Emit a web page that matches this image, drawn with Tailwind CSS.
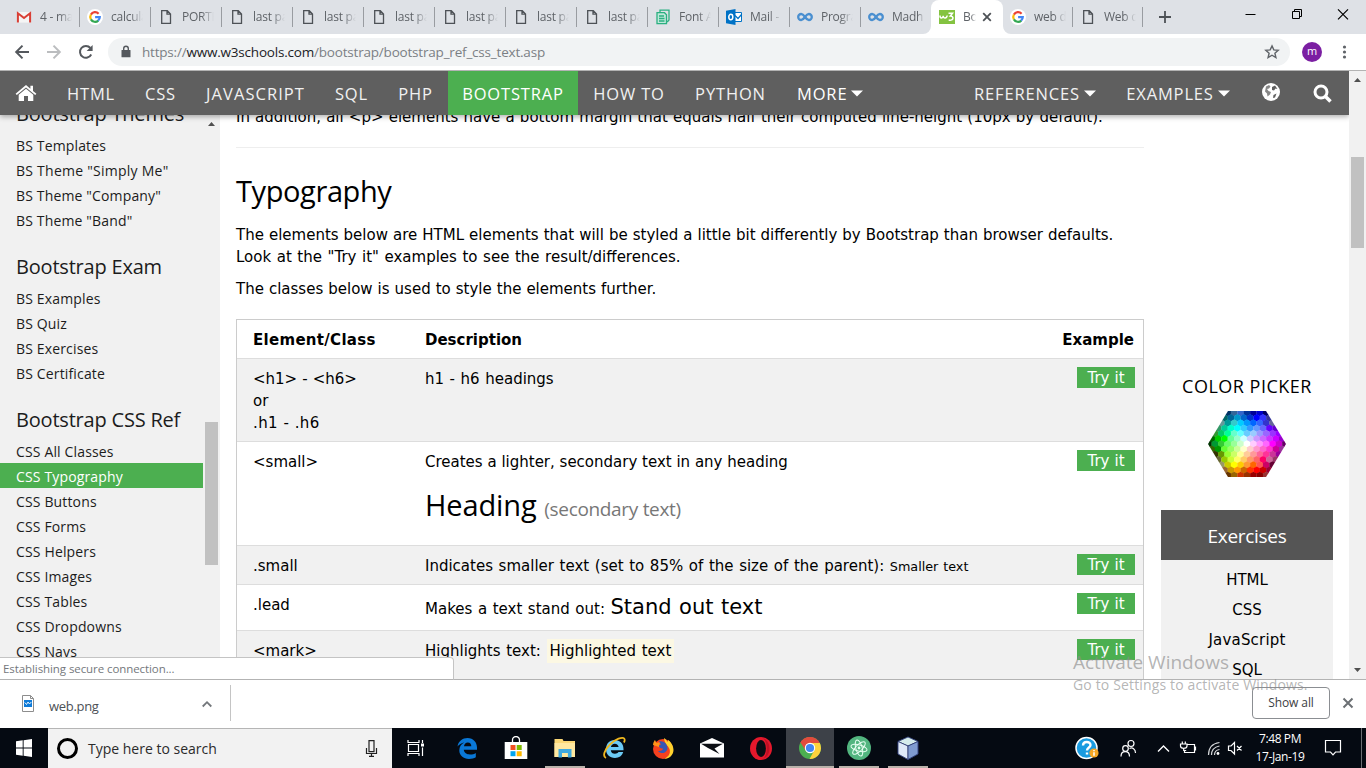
<!DOCTYPE html>
<html lang="en">
<head>
<meta charset="utf-8">
<title>Bootstrap CSS Typography Reference</title>
<script src="https://cdn.jsdelivr.net/npm/@tailwindcss/browser@4"></script>
</head>
<body class="overflow-hidden bg-white font-['Open_Sans','Noto_Sans',sans-serif] text-black">
<svg class="hidden">
  <symbol id="doc" viewBox="0 0 16 16"><path d="M3.7 1.7h5.6l3.2 3.2v9.4H3.7zM9 1.7v3.5h3.5" fill="none" stroke="#4d5156" stroke-width="1.3"/></symbol>
  <symbol id="goog" viewBox="0 0 16 16"><circle cx="8" cy="8" r="8" fill="#fff"/><g fill="none" stroke-width="2.2"><path d="M3.9 5.6A4.8 4.8 0 0 1 11.6 4.7" stroke="#ea4335"/><path d="M3.9 10.4a4.8 4.8 0 0 1 0-4.8" stroke="#fbbc05"/><path d="M11.3 11.6a4.8 4.8 0 0 1-7.4-1.2" stroke="#34a853"/><path d="M8.1 8.1h4.7a4.8 4.8 0 0 1-1.7 3.6" stroke="#4285f4"/></g></symbol>
  <symbol id="loop" viewBox="0 0 16 16"><path d="M8 8C6.500 5.800 5.600 5 4.200 5a3 3 0 0 0 0 6C5.600 11 6.500 10.200 8 8s2.400-3 3.800-3a3 3 0 0 1 0 6C10.400 11 9.500 10.200 8 8z" fill="none" stroke="#4a8fd0" stroke-width="2.300"/></symbol>
</svg>
<div class="relative flex h-[768px] w-[1366px] flex-col overflow-hidden">

  <!-- Tab strip -->
  <header class="flex h-[34px] shrink-0 bg-[#dee1e6] pl-[9px] text-[12px] tracking-[-0.250px] text-[#5f6368]">
    <div class="flex h-[34px] w-[71px] shrink-0 items-center pl-[7px]"><svg class="size-4 shrink-0" viewBox="0 0 16 16"><path d="M1 3h14v10.600H1z" fill="#f5f5f5"/><path d="M1.900 13.600V4.200L8 9l6.100-4.800v9.400" fill="none" stroke="#d93f35" stroke-width="2"/></svg><span class="ml-2 w-8 overflow-hidden whitespace-nowrap mask-r-from-60%">4 - mad</span><i class="ml-auto h-5 w-px bg-[#999ca1]"></i></div>
    <div class="flex h-[34px] w-[71px] shrink-0 items-center pl-[7px]"><svg class="size-4 shrink-0"><use href="#goog"/></svg><span class="ml-2 w-8 overflow-hidden whitespace-nowrap mask-r-from-60%">calcula</span><i class="ml-auto h-5 w-px bg-[#999ca1]"></i></div>
    <div class="flex h-[34px] w-[71px] shrink-0 items-center pl-[7px]"><svg class="size-4 shrink-0"><use href="#doc"/></svg><span class="ml-2 w-8 overflow-hidden whitespace-nowrap mask-r-from-60%">PORTF</span><i class="ml-auto h-5 w-px bg-[#999ca1]"></i></div>
    <div class="flex h-[34px] w-[71px] shrink-0 items-center pl-[7px]"><svg class="size-4 shrink-0"><use href="#doc"/></svg><span class="ml-2 w-8 overflow-hidden whitespace-nowrap mask-r-from-60%">last pa</span><i class="ml-auto h-5 w-px bg-[#999ca1]"></i></div>
    <div class="flex h-[34px] w-[71px] shrink-0 items-center pl-[7px]"><svg class="size-4 shrink-0"><use href="#doc"/></svg><span class="ml-2 w-8 overflow-hidden whitespace-nowrap mask-r-from-60%">last pa</span><i class="ml-auto h-5 w-px bg-[#999ca1]"></i></div>
    <div class="flex h-[34px] w-[71px] shrink-0 items-center pl-[7px]"><svg class="size-4 shrink-0"><use href="#doc"/></svg><span class="ml-2 w-8 overflow-hidden whitespace-nowrap mask-r-from-60%">last pa</span><i class="ml-auto h-5 w-px bg-[#999ca1]"></i></div>
    <div class="flex h-[34px] w-[71px] shrink-0 items-center pl-[7px]"><svg class="size-4 shrink-0"><use href="#doc"/></svg><span class="ml-2 w-8 overflow-hidden whitespace-nowrap mask-r-from-60%">last pa</span><i class="ml-auto h-5 w-px bg-[#999ca1]"></i></div>
    <div class="flex h-[34px] w-[71px] shrink-0 items-center pl-[7px]"><svg class="size-4 shrink-0"><use href="#doc"/></svg><span class="ml-2 w-8 overflow-hidden whitespace-nowrap mask-r-from-60%">last pa</span><i class="ml-auto h-5 w-px bg-[#999ca1]"></i></div>
    <div class="flex h-[34px] w-[71px] shrink-0 items-center pl-[7px]"><svg class="size-4 shrink-0"><use href="#doc"/></svg><span class="ml-2 w-8 overflow-hidden whitespace-nowrap mask-r-from-60%">last pa</span><i class="ml-auto h-5 w-px bg-[#999ca1]"></i></div>
    <div class="flex h-[34px] w-[71px] shrink-0 items-center pl-[7px]"><svg class="size-4 shrink-0" viewBox="0 0 16 16" fill="none" stroke="#2bb081" stroke-width="1.300"><path d="M5 3V1.200h9V11l-1.800 2"/><path d="M2 3.700h7.500l2 2V14.700H2z" fill="#bfe8da"/><path d="M4 7h5M4 9.500h5.500M4 12h5.500"/></svg><span class="ml-2 w-8 overflow-hidden whitespace-nowrap mask-r-from-60%">Font A</span><i class="ml-auto h-5 w-px bg-[#999ca1]"></i></div>
    <div class="flex h-[34px] w-[71px] shrink-0 items-center pl-[7px]"><svg class="size-4 shrink-0" viewBox="0 0 16 16"><path d="M8 3.500h7.500v9H8z" fill="#fff" stroke="#0072c6"/><path d="M9 6.500l3 3 3.500-4" fill="none" stroke="#0072c6" stroke-width="1.200"/><path d="M0 1.800 9.500 0v16L0 14.200z" fill="#0072c6"/><ellipse cx="4.800" cy="8" rx="2" ry="2.700" fill="none" stroke="#fff" stroke-width="1.500"/></svg><span class="ml-2 w-8 overflow-hidden whitespace-nowrap mask-r-from-60%">Mail -</span><i class="ml-auto h-5 w-px bg-[#999ca1]"></i></div>
    <div class="flex h-[34px] w-[71px] shrink-0 items-center pl-[7px]"><svg class="size-4 shrink-0"><use href="#loop"/></svg><span class="ml-2 w-8 overflow-hidden whitespace-nowrap mask-r-from-60%">Progra</span><i class="ml-auto h-5 w-px bg-[#999ca1]"></i></div>
    <div class="flex h-[34px] w-[70px] shrink-0 items-center pl-[7px]"><svg class="size-4 shrink-0"><use href="#loop"/></svg><span class="ml-2 w-8 overflow-hidden whitespace-nowrap mask-r-from-80%">Madhu</span></div>
    <div class="relative flex h-[34px] w-[72px] shrink-0 items-center rounded-t-lg bg-white pl-2">
      <svg class="absolute bottom-0 -left-2 size-2" viewBox="0 0 8 8"><path d="M8 0v8H0a8 8 0 0 0 8-8z" fill="#fff"/></svg>
      <svg class="absolute -right-2 bottom-0 size-2" viewBox="0 0 8 8"><path d="M0 0v8h8a8 8 0 0 1-8-8z" fill="#fff"/></svg>
      <svg class="size-4 shrink-0" viewBox="0 0 16 16"><path d="M0 1h16v14H0z" fill="#84c341"/><path d="M1 6.500c0 3.300 2.800 3.300 3.200.3 0 3 3.600 3 4-.3M9.500 4.200h4L11.300 7c4 0 3.400 5.300-1.600 4" fill="none" stroke="#fff" stroke-width="1.500"/></svg>
      <span class="ml-2 w-[13px] overflow-hidden whitespace-nowrap mask-r-from-60%">Bo</span>
      <svg class="ml-[5px] size-3" viewBox="0 0 12 12"><path d="M2.200 2.200l7.600 7.600M9.800 2.200 2.200 9.800" stroke="#4d5156" stroke-width="1.800"/></svg>
    </div>
    <div class="flex h-[34px] w-[70px] shrink-0 items-center pl-[7px]"><svg class="size-4 shrink-0"><use href="#goog"/></svg><span class="ml-2 w-8 overflow-hidden whitespace-nowrap mask-r-from-60%">web d</span><i class="ml-auto h-5 w-px bg-[#999ca1]"></i></div>
    <div class="flex h-[34px] w-[70px] shrink-0 items-center pl-[7px]"><svg class="size-4 shrink-0"><use href="#doc"/></svg><span class="ml-2 w-8 overflow-hidden whitespace-nowrap mask-r-from-60%">Web d</span><i class="ml-auto h-5 w-px bg-[#999ca1]"></i></div>
    <svg class="mt-[11px] ml-4 size-3" viewBox="0 0 12 12"><path d="M6 0v12M0 6h12" stroke="#4d5156" stroke-width="1.800"/></svg>
    <svg class="ml-auto h-[34px] w-[130px]" viewBox="0 0 130 34" fill="none" stroke="#000"><path d="M9.500 14.500h10"/><path d="M56.500 11.500h7v7h-7zM58.500 11.500v-2h7v7h-2"/><path d="M102 9.300l10 10M112 9.300l-10 10" stroke-width="1.200"/></svg>
  </header>

  <!-- Toolbar -->
  <div class="flex h-[37px] shrink-0 items-center border-b border-[#b3b3b3] bg-white">
    <svg class="h-9 w-[108px] shrink-0" viewBox="0 0 108 36" fill="none" stroke-width="2"><path d="M29 18H16.500M22.500 11.600 16.200 18l6.300 6.400" stroke="#54585d"/><path d="M47 18h12.500M53.500 11.600 59.800 18l-6.300 6.400" stroke="#bbbdbf"/><path d="M91.200 20.500a5.900 5.900 0 1 1-.8-6.500" stroke="#54585d"/><path d="M92.600 11v6h-6z" fill="#54585d"/></svg>
    <div class="flex h-7 w-[1182px] items-center rounded-full bg-[#f1f3f4]">
      <svg class="ml-3 h-[14px] w-3" viewBox="0 0 12 14"><path d="M2 5h8a.5.5 0 0 1 .5.500v6.200a.5.500 0 0 1-.5.500H2a.5.500 0 0 1-.5-.5V5.500A.5.500 0 0 1 2 5z" fill="#54585d"/><path d="M3.700 6V3.600a2.300 2.300 0 0 1 4.600 0V6" fill="none" stroke="#54585d" stroke-width="1.400"/></svg>
      <span class="ml-[10px] text-[13.500px] tracking-[-0.200px] text-[#7b7f84]">https://<span class="text-[#202124]">www.w3schools.com</span>/bootstrap/bootstrap_ref_css_text.asp</span>
      <svg class="mr-[10px] ml-auto size-4" viewBox="0 0 16 16"><path d="M8 1.900l1.800 4 4.400.4-3.300 2.900 1 4.300L8 11.200l-3.900 2.300 1-4.300-3.300-2.900 4.400-.4z" fill="none" stroke="#5f6368" stroke-width="1.400"/></svg>
    </div>
    <div class="ml-3 flex size-5 items-center justify-center rounded-full bg-[#7b1fa2] pb-px text-[11px] text-white">m</div>
    <svg class="ml-[18px] h-4 w-1 overflow-visible" viewBox="0 0 4 16" fill="#5f6368"><circle cx="4.500" cy="3" r="1.600"/><circle cx="4.500" cy="8" r="1.600"/><circle cx="4.500" cy="13" r="1.600"/></svg>
  </div>

  <!-- Web page -->
  <div class="flex h-[608px] shrink-0">
    <div class="flex w-[1349px] flex-col overflow-hidden">
      <nav class="z-10 flex h-11 shrink-0 bg-[#5f5f5f] pt-px text-[16.500px] leading-[44px] tracking-[0.850px] text-[#f1f1f1] shadow-[0_2px_5px_rgba(0,0,0,0.3)]">
        <a class="flex w-[52px] items-center justify-center"><svg class="mt-[-2px] h-[18px] w-[22px]" viewBox="0 0 22 18" fill="#fff"><path d="M11 1 .6 9.800l1.200 1.300L11 3.500l9.200 7.600 1.200-1.300L18 6.900V1.700h-2.600v3z"/><path d="M11 4.800 3.700 10.800V17H9v-5h4v5h5.300v-6.200z"/></svg></a>
        <a class="w-[78px] text-center">HTML</a>
        <a class="w-[61px] text-center">CSS</a>
        <a class="w-[129px] text-center tracking-[1.050px]">JAVASCRIPT</a>
        <a class="w-[63px] text-center">SQL</a>
        <a class="w-[65px] text-center">PHP</a>
        <a class="-mt-px w-[130px] bg-[#4caf50] pt-px text-center text-white">BOOTSTRAP</a>
        <a class="w-[102px] text-center">HOW TO</a>
        <a class="w-[101px] text-center">PYTHON</a>
        <a class="flex items-center gap-1 pl-4 text-white">MORE<svg class="h-[7px] w-3" viewBox="0 0 12 7"><path d="M0 .5h12L6 6.500z" fill="#fff"/></svg></a>
        <a class="ml-auto flex w-[152px] items-center justify-center gap-1">REFERENCES<svg class="h-[7px] w-3" viewBox="0 0 12 7"><path d="M0 .5h12L6 6.500z" fill="#fff"/></svg></a>
        <a class="flex w-[134px] items-center justify-center gap-1">EXAMPLES<svg class="h-[7px] w-3" viewBox="0 0 12 7"><path d="M0 .5h12L6 6.500z" fill="#fff"/></svg></a>
        <a class="flex w-[51px] items-center justify-center"><svg class="-mt-1 size-[18px]" viewBox="0 0 18 18"><circle cx="9" cy="9" r="9" fill="#fff"/><path d="M4 3.500 7 2l1.500 1.500L7 5.500 5 6l1.500 2 2.500 1-1 2.500-2.500 2L5 10.500 3 8.500z" fill="#5f5f5f" opacity=".75"/><path d="M10 4l3-1.500L15.500 6l-2-.5-1.500 2L10 7z" fill="#5f5f5f"/><path d="M11.500 12l3-1.500-1.500 4-2 .5z" fill="#5f5f5f"/></svg></a>
        <a class="flex w-[53px] items-center justify-center"><svg class="-mt-px size-[19px]" viewBox="0 0 19 19" fill="none" stroke="#fff"><circle cx="8" cy="8" r="6" stroke-width="3"/><path d="M12.500 12.500l5 5" stroke-width="3.600"/></svg></a>
      </nav>

      <div class="flex h-[564px]">
        <aside class="flex w-[220px] shrink-0 overflow-hidden bg-[#f1f1f1]">
          <div class="-mt-[36px] w-[203px] shrink-0 whitespace-nowrap text-[14px] tracking-[0.150px] text-[#1c1c1c] [&>a]:block [&>a]:h-[25px] [&>a]:pl-4 [&>a]:leading-[27px] [&>h2]:h-[53px] [&>h2]:pt-[15px] [&>h2]:pl-4 [&>h2]:text-[20px] [&>h2]:leading-[39px] [&>h2]:tracking-[-0.200px]">
            <h2>Bootstrap Themes</h2>
            <a>BS Templates</a><a class="tracking-[0.250px]">BS Theme "Simply Me"</a><a>BS Theme "Company"</a><a>BS Theme "Band"</a>
            <h2>Bootstrap Exam</h2>
            <a>BS Examples</a><a>BS Quiz</a><a>BS Exercises</a><a>BS Certificate</a>
            <h2>Bootstrap CSS Ref</h2>
            <a>CSS All Classes</a><a class="bg-[#4caf50] text-white">CSS Typography</a><a>CSS Buttons</a><a>CSS Forms</a><a>CSS Helpers</a><a>CSS Images</a><a>CSS Tables</a><a>CSS Dropdowns</a><a>CSS Navs</a>
          </div>
          <div class="flex w-[17px] flex-col items-center">
            <svg class="mt-[7px] h-1 w-[7px]" viewBox="0 0 7 4"><path d="M3.500 0 7 4H0z" fill="#505050"/></svg>
            <div class="mt-[296px] h-[143px] w-[13px] bg-[#c1c1c1]"></div>
          </div>
        </aside>

        <main class="w-[924px] shrink-0 overflow-hidden pl-4 font-['DejaVu_Sans',sans-serif] text-[15px] leading-[22px] [word-spacing:0.250px]">
          <p class="-mt-[9px] h-[41px] whitespace-nowrap [word-spacing:0.400px]">In addition, all &lt;p&gt; elements have a bottom margin that equals half their computed line-height (10px by default).</p>
          <hr class="border-[#eee]">
          <h2 class="mt-[21px] h-[46px] font-['Open_Sans',sans-serif] text-[29px] leading-[44px] tracking-[-0.400px]">Typography</h2>
          <p class="mt-[9px] whitespace-nowrap">The elements below are HTML elements that will be styled a little bit differently by Bootstrap than browser defaults.<br><span class="[word-spacing:0.800px]">Look at the "Try it" examples to see the result/differences.</span></p>
          <p class="mt-[10px]">The classes below is used to style the elements further.</p>

          <div class="mt-[19px] border border-[#ccc] [&>div]:grid [&>div]:grid-cols-[172px_1fr_80px] [&>div]:border-b [&>div]:border-[#ddd] [&>div]:pt-[9px] [&>div]:pr-2 [&>div]:pl-4 [&>div>a]:-mt-px">
            <div class="h-[39px] font-bold"><span class="tracking-[0.300px]">Element/Class</span><span>Description</span><span class="text-right"><span class="mr-px">Example</span></span></div>
            <div class="h-[83px] bg-[#f1f1f1]"><span>&lt;h1&gt; - &lt;h6&gt;<br>or<br><span class="tracking-[0.400px]">.h1 - .h6</span></span><span class="[word-spacing:0.800px]">h1 - h6 headings</span><a class="h-[21px] w-[58px] justify-self-end bg-[#4caf50] text-center text-white">Try it</a></div>
            <div class="h-[104px]"><span>&lt;small&gt;</span><div><p class="[word-spacing:0px]">Creates a lighter, secondary text in any heading</p><h1 class="mt-2.5 font-['Open_Sans',sans-serif] text-[29px] leading-[44px] tracking-[-0.100px]">Heading <small class="text-[19px] tracking-[-0.350px] text-[#777]">(secondary text)</small></h1></div><a class="h-[21px] w-[58px] justify-self-end bg-[#4caf50] text-center text-white">Try it</a></div>
            <div class="h-[39px] bg-[#f1f1f1]"><span>.small</span><p class="[word-spacing:0.850px]">Indicates smaller text (set to 85% of the size of the parent): <span class="text-[12.750px]">Smaller text</span></p><a class="h-[21px] w-[58px] justify-self-end bg-[#4caf50] text-center text-white">Try it</a></div>
            <div class="h-[46px]"><span>.lead</span><p class="-mt-px leading-[29px] [word-spacing:0.800px]">Makes a text stand out: <span class="text-[21px]">Stand out text</span></p><a class="h-[21px] w-[58px] justify-self-end bg-[#4caf50] text-center text-white">Try it</a></div>
            <div class="h-[60px] bg-[#f1f1f1]"><span>&lt;mark&gt;</span><p class="[word-spacing:0.900px]">Highlights text: <mark class="bg-[#fcf8e3] px-[3px] py-[3px]">Highlighted text</mark></p><a class="h-[21px] w-[58px] justify-self-end bg-[#4caf50] text-center text-white">Try it</a></div>
          </div>
        </main>

        <aside class="flex w-[205px] flex-col items-center pt-[257px] pr-[16px] pl-[17px]">
          <h3 class="text-[18px] leading-[28px] tracking-[0.500px] whitespace-nowrap">COLOR PICKER</h3>
          <svg id="hex" class="mt-[11px] h-[66px] w-[78px] shrink-0 [clip-path:polygon(25.6%_0,74.4%_0,100%_50%,74.4%_100%,25.6%_100%,0_50%)]" viewBox="2.5 1.5 73 63" preserveAspectRatio="none"></svg>
          <div class="mt-[33px] flex h-[50px] w-[172px] shrink-0 items-center justify-center bg-[#555] pt-0.5 text-[19px] tracking-[-0.300px] text-white">Exercises</div>
          <div class="h-[130px] w-[172px] shrink-0 bg-[#f1f1f1] pt-[5px] text-center font-['DejaVu_Sans',sans-serif] text-[15px] leading-[30px] text-black">HTML<br>CSS<br><span class="tracking-[0.200px]">JavaScript</span><br>SQL</div>
        </aside>
      </div>
    </div>
    <div class="flex w-[17px] flex-col items-center bg-[#f1f1f1]">
      <svg class="mt-[7px] h-1 w-[7px]" viewBox="0 0 7 4"><path d="M3.500 0 7 4H0z" fill="#505050"/></svg>
      <div class="mt-[75px] h-[91px] w-[13px] bg-[#c1c1c1]"></div>
      <svg class="mt-auto mb-[7px] h-1 w-[7px]" viewBox="0 0 7 4"><path d="M3.500 4 7 0H0z" fill="#505050"/></svg>
    </div>
  </div>

  <!-- Download shelf -->
  <div class="flex h-[49px] shrink-0 border-t border-[#b3b3b3] bg-white">
    <svg class="mt-[15px] ml-[21px] h-[17px] w-[14px] shrink-0" viewBox="0 0 14 17"><path d="M1.500.5H9.500l3 3v13h-11z" fill="#fff" stroke="#8d8d8d"/><path d="M9.500.5v3h3" fill="none" stroke="#8d8d8d"/><path d="M3 5h8v7H3z" fill="#0f7bd8"/><path d="M3.800 7.500l1.700 2 1.500-2.500 1.500 2 1.800-2" fill="none" stroke="#fff" stroke-width=".9"/></svg>
    <span class="mt-[17px] ml-[14px] w-[150px] text-[13px] leading-[18px] tracking-[-0.300px] text-[#4d5156]">web.png</span>
    <svg class="mt-5 ml-[3px] h-2 w-[10px]" viewBox="0 0 10 8"><path d="M.7 6.500 5 2.200l4.300 4.300" fill="none" stroke="#73777b" stroke-width="1.800"/></svg>
    <div class="mt-[5px] ml-[17.500px] h-9 w-px bg-[#c4c4c4]"></div>
    <div class="mt-[7px] ml-auto flex h-8 w-[78px] items-center justify-center rounded border border-[#8b8e92] text-[12px] tracking-[-0.100px] text-[#3c4043]">Show all</div>
    <svg class="mt-[17px] mr-3 ml-3 size-3" viewBox="0 0 12 12"><path d="M1.500 1.500l9 9M10.500 1.500l-9 9" stroke="#6c7074" stroke-width="2"/></svg>
  </div>

  <!-- Taskbar -->
  <footer class="flex h-10 shrink-0 bg-[#050a12] text-white">
    <svg class="h-10 w-12 shrink-0" viewBox="0 0 48 40" fill="#fff"><path d="M16 13.200l6.700-.9v7.300H16zM23.600 12.200l8.400-1.200v8.600h-8.400zM16 20.400h6.700v7.300l-6.700-1zM23.600 20.400H32v8.600l-8.400-1.200z"/></svg>
    <div class="flex w-[344px] items-center border-t border-[#b5b5b5] bg-[#f2f2f2] pl-[9px]">
      <div class="size-[21px] rounded-full border-[3px] border-black"></div>
      <span class="ml-[10px] text-[14px] text-[#2b2b2b]">Type here to search</span>
      <svg class="mr-[14px] ml-auto h-[17px] w-[13px]" viewBox="0 0 13 17" fill="none" stroke="#222" stroke-width="1.200"><path d="M4 .6h5v11H4zM1.500 8v5.500h10V8M6.500 13.500v2.800M4 16.300h5"/></svg>
    </div>
    <svg class="h-10 w-[51px] shrink-0" viewBox="0 0 51 40" fill="none" stroke="#fff" stroke-width="1.200"><path d="M16 12v2.500h11V12M16 28v-2.500h11V28M16.500 16.500h10v7h-10zM30.500 12v3M30.500 19.500V28"/><path d="M29 15.500h3v3h-3z" fill="#fff" stroke="none"/></svg>
    <div class="flex gap-px [&>div]:flex [&>div]:h-10 [&>div]:w-12 [&>div]:items-center [&>div]:justify-center">
      <div><svg class="size-6" viewBox="0 0 24 24"><path d="M2.500 10.500C3.500 5 7.500 2 12.500 2c6 0 9.500 4.500 9.500 9.500v2.300H8.800c.2 3 3 4.700 6.200 4.700 2.400 0 4.400-.7 5.800-1.600v4.300c-1.700 1-4 1.700-6.800 1.700-5.600 0-9.700-3.300-9.700-8.600 0-3.500 2-6.400 5-7.700-2.800.6-5 2-6.800 3.900zM9 10.200h7.300c0-2-1.200-3.700-3.500-3.700-2 0-3.500 1.500-3.800 3.700z" fill="#0a78d7"/></svg></div>
      <div><svg class="size-6" viewBox="0 0 24 24"><path d="M8.500 7V4a3.500 3.500 0 0 1 7 0v3" fill="none" stroke="#fff" stroke-width="1.300"/><path d="M.7 6h22.600v17H.7z" fill="#fff"/><path d="M6.500 9h5v5h-5z" fill="#f25022"/><path d="M12.700 9h5v5h-5z" fill="#7fba00"/><path d="M6.500 15.200h5v5h-5z" fill="#00a4ef"/><path d="M12.700 15.200h5v5h-5z" fill="#ffb900"/></svg></div>
      <div class="bg-[linear-gradient(#b9b2aa,#b9b2aa)] bg-[size:40px_2px] bg-bottom bg-no-repeat"><svg class="size-6" viewBox="0 0 24 24"><path d="M1.500 3h8l1 2H22v16H1.500z" fill="#fbd876"/><path d="M1.500 7H22v14H1.500z" fill="#ffe8a0"/><path d="M5.500 13h13v8.500h-3.600V17H9v4.500H5.500z" fill="#3fa9e0"/></svg></div>
      <div><svg class="size-6" viewBox="0 0 24 24"><path d="M12.500 4c5.500 0 9 3.500 9 9v1.200H8.800c.2 2.300 1.900 3.600 4.200 3.600 1.500 0 2.800-.6 3.500-1.700h4.700c-1 3.800-4.200 5.900-8.200 5.900-5.400 0-9-3.500-9-8.900C4 7.700 7.600 4 12.500 4zM8.900 11h7.700c-.2-2-1.700-3.300-3.800-3.300S9.200 9 8.900 11z" fill="#6ccaf5"/><path d="M4 22C.5 20.500 2 14 8 8.500 13.500 3 20.500.5 22.200 2.500c.8 1 .5 2.500-.3 4" fill="none" stroke="#f0b81f" stroke-width="1.800"/></svg></div>
      <div><svg class="size-6" viewBox="0 0 24 24"><circle cx="12" cy="13" r="10" fill="#f5401e"/><path d="M13 2c2 1 3 3 3 4 1-.5 1-2 1-2 3 2 5.500 6 5.500 10 0 5-4.500 9-9.500 9 4-2 7-5 5.500-10-1-3-5-5-5.500-11z" fill="#ffd22e"/><path d="M2 9c0-3 2-5 2-5l1.500 3L9 6l-1 5z" fill="#ff9418"/><path d="M8 5.500c4-1.500 8.500 2 8.500 6.500s-6 7-9.500 3c3 .5 5-1.200 5-2.500-2 .5-4-1-4-3l2-1z" fill="#3657b5"/></svg></div>
      <div><svg class="h-5 w-6" viewBox="0 0 24 20"><path d="M0 5.500 12 0l12 5.500V19.500H0z" fill="#fff"/><path d="M1 5.800h22L14.500 10.500 19.500 16 8 10z" fill="#0b0e14"/></svg></div>
      <div><svg class="size-6" viewBox="0 0 24 24"><ellipse cx="12" cy="12.500" rx="11" ry="11.500" fill="#e5182c"/><ellipse cx="12" cy="12.500" rx="4.900" ry="8.500" fill="#0a0d14"/><path d="M14 2a11 11.500 0 0 1 0 21c5-3.500 5-17 0-21z" fill="#a50c1f" opacity=".6"/></svg></div>
      <div class="bg-[#3d4148] bg-[linear-gradient(#b9b2aa,#b9b2aa)] bg-[size:48px_2px] bg-bottom bg-no-repeat"><svg class="size-6" viewBox="0 0 24 24"><circle cx="12" cy="12" r="11" fill="#4caf50"/><path d="M12 12 2.500 6.500A11 11 0 0 1 21.500 6.500z" fill="#e24b3d"/><path d="M2.500 6.500 8 15l4-8h9.500A11 11 0 0 0 2.500 6.500z" fill="#e24b3d"/><path d="M12 7h9.800A11 11 0 0 1 11.500 23l5-9z" fill="#fdd23d"/><circle cx="12" cy="12" r="5.200" fill="#fff"/><circle cx="12" cy="12" r="4.100" fill="#4285f4"/></svg></div>
      <div class="bg-[linear-gradient(#b9b2aa,#b9b2aa)] bg-[size:40px_2px] bg-bottom bg-no-repeat"><svg class="size-6" viewBox="0 0 24 24"><circle cx="12" cy="12" r="12" fill="#52b57f"/><g fill="none" stroke="#e9fff3" stroke-width="1"><ellipse cx="12" cy="12" rx="3.200" ry="8.300" transform="rotate(-15 12 12)"/><ellipse cx="12" cy="12" rx="3.200" ry="8.300" transform="rotate(45 12 12)"/><ellipse cx="12" cy="12" rx="3.200" ry="8.300" transform="rotate(105 12 12)"/></g><circle cx="12" cy="12" r="1.400" fill="#e9fff3"/></svg></div>
      <div class="bg-[linear-gradient(#b9b2aa,#b9b2aa)] bg-[size:40px_2px] bg-bottom bg-no-repeat"><svg class="size-6" viewBox="0 0 24 24" stroke="#26336b" stroke-width=".8"><path d="M12 1 22 5.500V18L12 23.500 2 18V5.500z" fill="#9cb6dc"/><path d="M12 1 22 5.500 12 10 2 5.500z" fill="#d5ecec"/><path d="M12 10v13.500L2 18V5.500z" fill="#dfe9f8"/><path d="M12 10v13.500L22 18V5.500z" fill="#7f9bd0"/></svg></div>
    </div>
    <svg class="ml-auto h-10 w-[180px] shrink-0" viewBox="0 0 180 40" fill="none" stroke="#fff" stroke-width="1.200">
      <circle cx="20.500" cy="20" r="10.500" fill="#1a9be0" stroke-width="1.500"/><path d="M17 17.500c0-4.500 7.500-4.500 7.500-.5 0 2.500-3.500 2.500-3.500 5.500M21 24.500v2" stroke-width="2.400"/><circle cx="28" cy="25" r="4.600" fill="#f5a623" stroke="none"/><path d="M28 22v1.300M28 24.300v3.500" stroke-width="1.500"/>
      <circle cx="59.500" cy="20.500" r="2.800"/><path d="M55 28.500c0-6.500 8.500-6.500 8.500 0"/><circle cx="65" cy="15.500" r="3"/><path d="M63.500 20.500c3-1.500 6 .5 6 4.500"/>
      <path d="M92 23.500l5.500-5.500 5.500 5.500" stroke-width="1.400"/>
      <path d="M121.500 16.500h7v8h-10v-2M129.500 18.500v4M114.500 16h6.500v2c0 3-6.500 3-6.500 0zM116.300 13.500v2.500M119.300 13.500v2.500M117.700 20v2.500h2.500"/>
      <path d="M142.500 27c0-7 4-11.500 11-12.500M145.500 27c0-5 3-8 8-9M148.500 27c0-3 2-5 5-5.500" stroke="#d6d8da"/><circle cx="152" cy="25.500" r="1.400" fill="#fff" stroke="none"/>
      <path d="M162.500 18h2.500l3.500-3.500v11.500l-3.500-3.500h-2.500zM171 18l4.500 4.500M175.500 18l-4.500 4.500"/>
    </svg>
    <div class="ml-[3px] w-[62px] pt-[2px] text-center text-[12px] leading-[18px] tracking-[-0.400px] whitespace-nowrap">7:48 PM<br>17-Jan-19</div>
    <svg class="h-10 w-[55px] shrink-0" viewBox="0 0 55 40" fill="none" stroke="#fff" stroke-width="1.200"><path d="M14.500 12.500h15v11.500h-5l-2.500 2.800-2.500-2.800h-5z"/><path d="M50.500 0v40" stroke="#6b6e73" stroke-width="1"/></svg>
  </footer>

  <!-- Status bubble -->
  <div class="absolute top-[657px] left-0 h-[23px] w-[454px] rounded-tr border-t border-r border-b border-[#c4c4c4] border-b-[#b3b3b3] bg-white pl-[3px] text-[11.500px] leading-[21px] tracking-[-0.080px] text-[#74787c]">Establishing secure connection...</div>

  <!-- Activation watermark -->
  <div class="pointer-events-none absolute top-[649px] left-[1073px] whitespace-nowrap text-[#8c8c8c]/65">
    <div class="text-[19px] leading-[26px]">Activate Windows</div>
    <div class="pt-px text-[14px] leading-[18px] tracking-[0.150px]">Go to Settings to activate Windows.</div>
  </div>
</div>
<script>
const rows = [
 "036 369 36c 039 009 00c 006",
 "066 069 09c 06c 03c 00f 33f 339",
 "699 099 3cc 0cf 09f 06f 36f 33c 669",
 "396 0c9 0fc 0ff 3cf 39f 69f 66f 60f 60c",
 "393 0c6 0f9 6fc 6ff 6cf 9cf 99f 96f 93f 90f",
 "060 0c0 0f0 6f9 9fc cff ccf c9f c6f c3f c0f 90c",
 "030 093 3c3 6f6 9f9 cfc fff fcf f9f f6f f0f c0c 606",
 "360 090 6f3 9f6 cf9 ffc fcc f9c f6c f3c c09 939",
 "330 690 9f3 cf6 ff9 fc9 f99 f69 f39 c39 909",
 "663 9c0 cf3 ff6 fc6 f96 f66 f06 c69 936",
 "996 cc0 ff0 fc0 f93 f60 f55 c06 603",
 "963 c90 f90 c60 f30 f00 c00 903",
 "630 960 c30 930 900 800 933"
];
let cells = "";
rows.forEach((row, r) => {
  const list = row.split(" ");
  const draw = (i, c) => {
    const x = 39 + (i - (list.length - 1) / 2) * 6, y = 3 + r * 5;
    cells += `<path d="M${x} ${y - 3.6}l3.100 1.800v3.600l-3.100 1.800l-3.100 -1.800v-3.600z" fill="#${c}"/>`;
  };
  // Repeat the outer colours once on each side so the clipped edge stays solid
  draw(-1, list[0]);
  draw(list.length, list[list.length - 1]);
  list.forEach((c, i) => draw(i, c));
});
document.getElementById("hex").innerHTML = cells;
</script>
</body>
</html>
